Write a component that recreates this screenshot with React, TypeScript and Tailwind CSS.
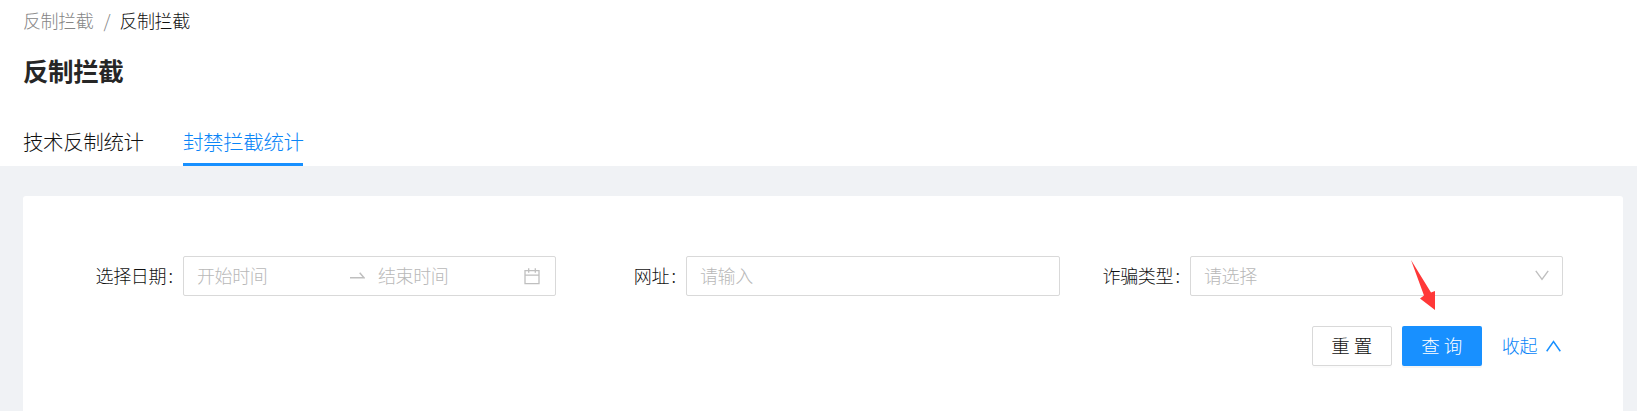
import type { ReactNode } from "react";

function Field({ label, labelWidth, children }: { label: string; labelWidth: string; children: ReactNode }) {
  return (
    <div className="flex h-10 items-center">
      <div className={`${labelWidth} flex shrink-0 justify-end pb-px`}>
        <span>{label}</span>
        <span className="ml-[2.5px] mr-[10.5px] w-1">:</span>
      </div>
      {children}
    </div>
  );
}

const box = "flex h-10 items-center rounded-[2px] border border-[#d9d9d9] bg-white px-[13px] text-[#b8b8b8]";

export default function App() {
  return (
    <div className="relative h-[411px] w-[1637px] overflow-hidden bg-[#f0f2f5] font-['Noto_Sans_CJK_SC',sans-serif] text-[18px] font-light leading-[27px] tracking-[-0.4px] text-[#111111]">
      <header className="flex h-[166px] flex-col bg-white px-[23px] pt-[7px]">
        <nav className="flex text-[#858585]">
          <span>反制拦截</span>
          <span className="mx-2.5 w-[7px]">/</span>
          <span className="-ml-px text-[#111111]">反制拦截</span>
        </nav>
        <h1 className="mt-5 text-[25.5px] font-bold leading-8 text-[#262626]">反制拦截</h1>
        <div className="mt-auto flex gap-10 text-[20.5px] leading-[30px]">
          <button className="h-[40px] w-[120px] whitespace-nowrap border-b-[3px] border-transparent pb-[7px] text-left">技术反制统计</button>
          <button className="h-[40px] w-[120px] whitespace-nowrap border-b-[3px] border-[#1890ff] pb-[7px] text-left text-[#0a85f7]">封禁拦截统计</button>
        </div>
      </header>
      <main className="pl-[23px] pr-[14px] pt-[30px]">
        <section className="h-[240px] rounded-[3px] bg-white pr-[60px] pt-[60px]">
          <div className="flex">
            <Field label="选择日期" labelWidth="w-[160px]">
              <div className={`${box} w-[373px]`}>
                <span className="w-[153px] pb-px">开始时间</span>
                <svg className="w-[15px] text-[#bfbfbf]" height="16" viewBox="0 0 15 16" fill="none" stroke="currentColor" strokeWidth="1.5">
                  <path d="M0 9.8H14L9.7 4.8" />
                </svg>
                <span className="ml-[13px] pb-px">结束时间</span>
                <svg className="ml-auto mr-[2px] text-[#bfbfbf]" width="16" height="17" viewBox="0 0 16 17" fill="none" stroke="currentColor" strokeWidth="1.3">
                  <path d="M1 2.7H15V15.6H1ZM1 7.2H15M4.7 .3V4.8M11.3 .3V4.8" />
                </svg>
              </div>
            </Field>
            <Field label="网址" labelWidth="w-[130px]">
              <div className={`${box} w-[374px] pb-px`}>请输入</div>
            </Field>
            <Field label="诈骗类型" labelWidth="w-[130px]">
              <div className={`${box} w-[373px]`}>
                <span className="pb-px">请选择</span>
                <svg className="-mt-[2px] ml-auto text-[#bfbfbf]" width="14" height="11" viewBox="0 0 14 11" fill="none" stroke="currentColor" strokeWidth="1.4">
                  <path d="M.8 .8L7 9.3L13.2 .8" />
                </svg>
              </div>
            </Field>
          </div>
          <div className="mt-[30px] flex items-center justify-end">
            <button className="h-10 w-20 rounded-[2px] border border-[#d9d9d9] bg-white pb-px pl-[4px] text-[18.5px] tracking-[4px] shadow-[0_2px_0_rgba(0,0,0,0.015)]">重置</button>
            <button className="ml-2.5 h-10 w-20 rounded-[2px] bg-[#1890ff] pb-px pl-[4px] text-[18.5px] tracking-[4px] text-white shadow-[0_2px_0_rgba(0,0,0,0.045)]">查询</button>
            <a className="ml-5 flex items-center text-[#0a85f7]">
              <span className="pb-px">收起</span>
              <svg className="ml-[9px] mr-[2px] text-[#1890ff]" width="15" height="12" viewBox="0 0 15 12" fill="none" stroke="currentColor" strokeWidth="1.5">
                <path d="M.7 11.3L7.5 1.5L14.3 11.3" />
              </svg>
            </a>
          </div>
        </section>
      </main>
      <svg className="absolute left-[1410px] top-[259px]" width="26" height="52" viewBox="0 0 26 52">
        <path d="M1 1L21 33.5L25 32V51L10 39.5L14 36.5Z" fill="#ff3838" />
      </svg>
    </div>
  );
}
